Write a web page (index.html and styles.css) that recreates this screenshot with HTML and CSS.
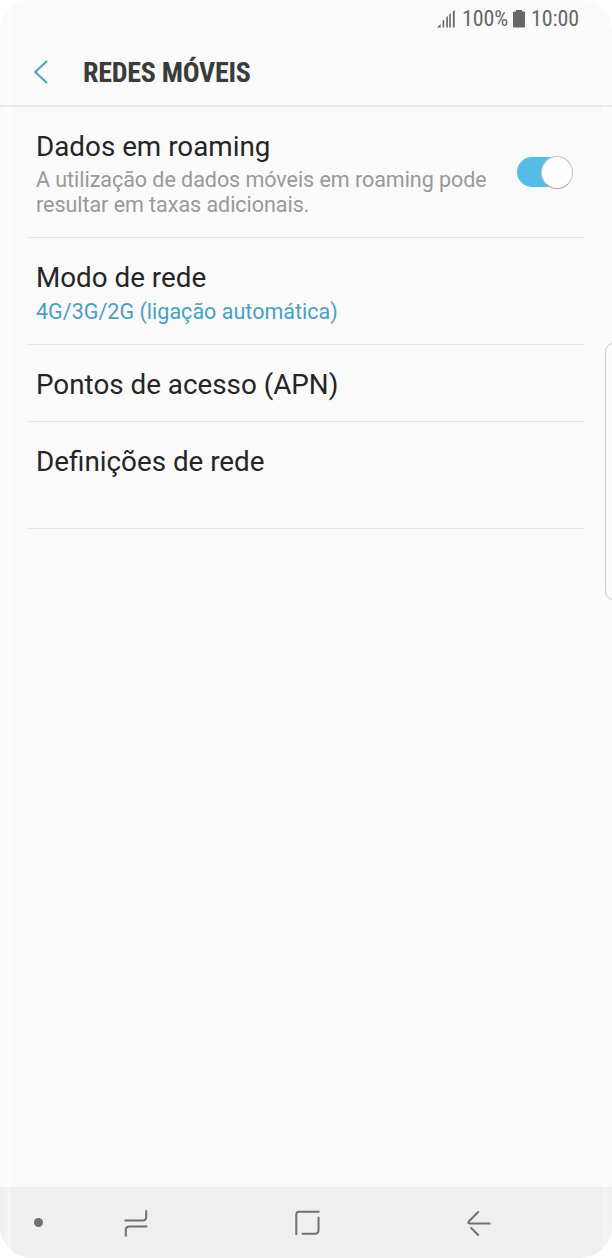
FILE: index.html
```html
<!DOCTYPE html>
<html lang="pt">
<head>
<meta charset="utf-8">
<title>Redes móveis</title>
<link rel="stylesheet" href="styles.css">
</head>
<body>
<div class="phone">
  <header class="top">
    <div class="status">
      <svg class="signal" width="18" height="18" viewBox="0 0 18 18"><path d="M0 17.5L3.6 14V17.5ZM5.6 11L7.2 9.5V17.5H5.6ZM9.3 7.5L10.9 6V17.5H9.3ZM12.2 4.5L13.8 3V17.5H12.2ZM15.9 1.5L17.7 0V17.5H15.9Z"/></svg>
      <span class="percent">100%</span>
      <svg class="battery" width="12" height="18" viewBox="0 0 12 18"><path d="M3 0H9V1.5H11Q12 1.5 12 2.5V16.5Q12 17.5 11 17.5H1Q0 17.5 0 16.5V2.5Q0 1.5 1 1.5H3Z"/></svg>
      <span class="clock">10:00</span>
    </div>
    <div class="bar">
      <svg class="back" width="15" height="24" viewBox="0 0 15 24"><path d="M13 1L1.2 12L13 23"/></svg>
      <h1 class="heading">REDES MÓVEIS</h1>
    </div>
  </header>
  <main class="list">
    <section class="row row-roaming">
      <div>
        <h2 class="title">Dados em roaming</h2>
        <p class="desc">A utilização de dados móveis em roaming pode<br>resultar em taxas adicionais.</p>
      </div>
      <div class="switch"><div class="thumb"></div></div>
    </section>
    <section class="row row-mode">
      <div>
        <h2 class="title">Modo de rede</h2>
        <p class="desc value">4G/3G/2G (ligação automática)</p>
      </div>
    </section>
    <section class="row row-apn"><h2 class="title">Pontos de acesso (APN)</h2></section>
    <section class="row row-network"><h2 class="title">Definições de rede</h2></section>
  </main>
  <nav class="nav">
    <span class="dot"></span>
    <svg class="recents" width="24" height="28" viewBox="0 0 24 28"><path d="M.5 11.5H18.5Q22.2 11.5 22.2 8V1.3M23.3 17.5H5.5Q1.8 17.5 1.8 21V27.5"/></svg>
    <svg class="home" width="26" height="26" viewBox="0 0 26 26"><path d="M2.3 25V4.5Q2.3 1.7 5 1.7H25.5M24.5 6.7V20Q24.5 23.8 21 23.8H7.8"/></svg>
    <svg class="return" width="26" height="28" viewBox="0 0 26 28"><path stroke-linecap="round" stroke-linejoin="round" d="M12.2 3L3 12.2Q1.3 14.5 4 14.5H23.5M5.2 19L12.2 26"/></svg>
  </nav>
  <div class="edge edge-left"></div>
  <div class="edge edge-right"></div>
  <div class="handle"></div>
</div>
</body>
</html>
```
FILE: styles.css
```css
body { margin: 0; background: #fff; font-family: Roboto, "Noto Sans", sans-serif; }
h1, h2, p { margin: 0; font-weight: 400; }
svg, .switch, .dot { flex: none; }
.phone { position: relative; display: flex; flex-direction: column; width: 612px; height: 1258px; background: #fafafa; border-radius: 32px; overflow: hidden; }
.top { box-sizing: border-box; height: 107px; border-bottom: 2px solid #e8e8e8; }
.status { display: flex; height: 37px; padding: 0 0 1px 437px; align-items: center; color: #666; font: 22px/38px "Roboto Condensed", Roboto, sans-serif; font-stretch: 75%; }
.signal, .battery { fill: #666; }
.percent { width: 45px; margin: 0 6px 0 7px; line-height: 36px; letter-spacing: -0.1px; white-space: nowrap; }
.clock { margin-left: 6px; line-height: 36px; letter-spacing: -0.1px; }
.bar { display: flex; height: 67px; padding-left: 34px; align-items: center; }
.back { fill: none; stroke: #4a9fc2; stroke-width: 2; }
.heading { margin-left: 34px; padding-top: 2px; color: #3b3b3b; font: 700 28px/36px "Roboto Condensed", Roboto, sans-serif; font-stretch: 75%; letter-spacing: -0.27px; white-space: nowrap; }
.list { flex: 1; padding: 0 27px; }
.row { box-sizing: border-box; display: flex; padding: 24px 9px 0; border-bottom: 1px solid #e4e4e4; justify-content: space-between; }
.row-roaming { height: 131px; }
.row-mode { height: 107px; }
.row-apn { height: 77px; }
.row-network { height: 107px; border-bottom-color: #e7e7e7; }
.title { color: #252525; font-size: 27.8px; line-height: 32px; white-space: nowrap; }
.desc { margin-top: 4px; color: #999; font-size: 21.5px; line-height: 25px; letter-spacing: -0.04px; white-space: nowrap; }
.value { margin-top: 5px; color: #4a9fc2; letter-spacing: 0.02px; }
.switch { box-sizing: border-box; width: 56px; height: 30px; margin: 26px 3px 0 0; border-radius: 15px; background: linear-gradient(90deg, #55bde5 44px, transparent 44px); }
.thumb { width: 30px; height: 31px; margin: -1px 0 0 24px; border-radius: 50%; background: #fdfdfd; border: 1px solid #c4c4c4; border-bottom-color: #aaa; }
.nav { display: flex; height: 71px; background: #efefef; align-items: center; padding-left: 34px; }
.dot { width: 9px; height: 9px; border-radius: 50%; background: #707070; }
.recents, .home, .return { fill: none; stroke: #707070; stroke-width: 2; }
.recents { margin-left: 81px; }
.home { margin-left: 146px; }
.return { margin-left: 146px; }
.edge { position: absolute; top: 0; bottom: 0; width: 12px; }
.edge-left { left: 0; background: linear-gradient(90deg, transparent, rgba(255,255,255,.35) 80%, transparent); }
.edge-right { right: 0; background: linear-gradient(270deg, transparent, rgba(255,255,255,.35) 60%, transparent); }
.handle { position: absolute; top: 343px; right: -10px; box-sizing: border-box; width: 17px; height: 257px; border: 1px solid #c8c8c8; border-radius: 10px; background: #fcfcfc; }
```
